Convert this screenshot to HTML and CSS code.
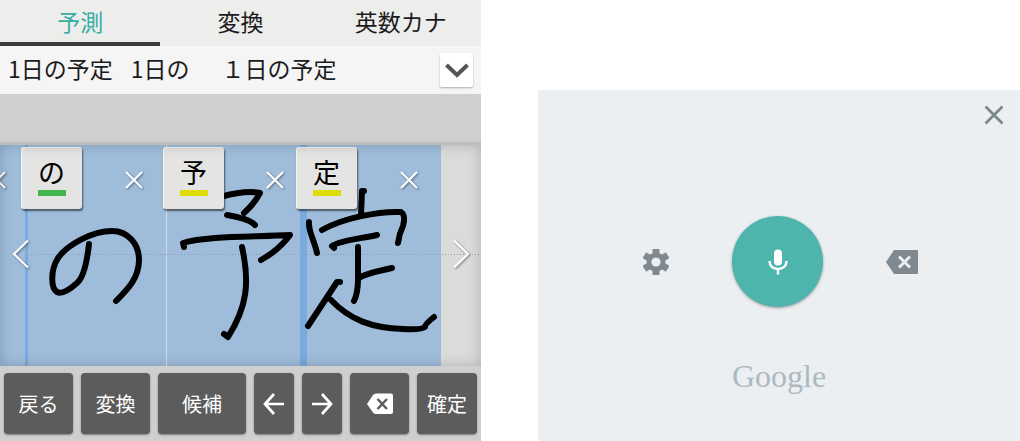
FILE: index.html
```
<!DOCTYPE html>
<html lang="ja">
<head>
  <meta charset="UTF-8">
  <meta name="viewport" content="width=device-width, initial-scale=1">
  <title>手書き入力と音声入力</title>
  <link rel="stylesheet" href="styles.css">
</head>
<body>
  <div class="page">
    <section class="handwriting">
      <nav class="tabs">
        <button type="button" class="tab active">予測</button>
        <button type="button" class="tab">変換</button>
        <button type="button" class="tab">英数カナ</button>
      </nav>

      <div class="candidates">
        <button type="button" class="candidate">1日の予定</button>
        <button type="button" class="candidate">1日の</button>
        <button type="button" class="candidate">１日の予定</button>
        <button type="button" class="expand" aria-label="候補を開く">
          <svg width="24" height="16" viewBox="0 0 24 16"><path d="M1.500 3 L12 13 L22.500 3" fill="none" stroke="#555" stroke-width="4"/></svg>
        </button>
      </div>

      <div class="spacer"></div>

      <div class="pad">
        <svg class="ink" viewBox="0 145 481 221" preserveAspectRatio="xMinYMin slice">
          <rect x="0" y="145" width="441" height="221" fill="#9fbddb"/>
          <rect x="25" y="145" width="3" height="221" fill="#7aabde"/>
          <rect x="166" y="145" width="1" height="221" fill="#d8dbdc"/>
          <rect x="300" y="145" width="7" height="221" fill="#7aabde"/>
          <line x1="28" y1="254.500" x2="481" y2="254.500" stroke="#8b9cac" stroke-dasharray="1 2"/>
          <g class="strokes">
            <!-- の -->
            <path d="M89 244 C87 262 83 278 77 283 C67 292 61 294 57 292 C51 288 50 271 58 258 C67 245 92 231 112 231 C128 231 139 244 139 260 C139 279 126 291 116 301"/>
            <!-- 予 -->
            <path d="M220 197 Q246 190 260 193 Q255 203 244 213"/>
            <path d="M227 215 Q250 219 255 225"/>
            <path d="M184 247 L183 243 C205 236 252 237 290 235 Q279 250 261 260"/>
            <path d="M242 247 C250 283 247 307 228 337 L224 334"/>
            <!-- 定 -->
            <path d="M364 191 L362 191 L361 215"/>
            <path d="M309 222 C308 231 315 242 317 253"/>
            <path d="M322 230 C343 218 379 211 401 212 Q406 215 403 226 Q399 234 398 243"/>
            <path d="M334 248 L332 246 C341 240 359 239 377 235"/>
            <path d="M358 247 V279 Q358 293 354 301"/>
            <path d="M359 278 Q364 274 392 268"/>
            <path d="M340 282 L337 282 L308 326"/>
            <path d="M331 300 C350 320 372 328 403 329 Q422 330 425 327 Q425 324 434 317"/>
          </g>
        </svg>

        <button type="button" class="tile tile-no">の</button>
        <button type="button" class="tile tile-yo">予</button>
        <button type="button" class="tile tile-tei">定</button>

        <button type="button" class="mark del-prev" aria-label="前の文字を削除"><svg width="20" height="20" viewBox="0 0 20 20"><path d="M2 2 L18 18 M18 2 L2 18"/></svg></button>
        <button type="button" class="mark del-no" aria-label="のを削除"><svg width="20" height="20" viewBox="0 0 20 20"><path d="M2 2 L18 18 M18 2 L2 18"/></svg></button>
        <button type="button" class="mark del-yo" aria-label="予を削除"><svg width="20" height="20" viewBox="0 0 20 20"><path d="M2 2 L18 18 M18 2 L2 18"/></svg></button>
        <button type="button" class="mark del-tei" aria-label="定を削除"><svg width="20" height="20" viewBox="0 0 20 20"><path d="M2 2 L18 18 M18 2 L2 18"/></svg></button>
        <button type="button" class="mark scroll-left" aria-label="左へ"><svg width="18" height="30" viewBox="0 0 18 30"><path d="M16 1.500 L2 15 L16 28.500"/></svg></button>
        <button type="button" class="mark scroll-right" aria-label="右へ"><svg width="18" height="30" viewBox="0 0 18 30"><path d="M2 1.500 L16 15 L2 28.500"/></svg></button>
      </div>

      <div class="keys">
        <button type="button" class="key">戻る</button>
        <button type="button" class="key">変換</button>
        <button type="button" class="key">候補</button>
        <button type="button" class="key" aria-label="左"><svg width="22" height="22" viewBox="0 0 22 22"><path d="M11 1 L2 11 L11 21 M2 11 H21" fill="none" stroke="#fff" stroke-width="2.700"/></svg></button>
        <button type="button" class="key" aria-label="右"><svg width="22" height="22" viewBox="0 0 22 22"><path d="M11 1 L20 11 L11 21 M20 11 H1" fill="none" stroke="#fff" stroke-width="2.700"/></svg></button>
        <button type="button" class="key" aria-label="削除"><svg width="26" height="22" viewBox="0 0 26 22"><path d="M9 0.500 H24 Q26 0.500 26 2.500 V19 Q26 21 24 21 H9 Q7 21 6 19.500 L0 11 L6 2 Q7 0.500 9 0.500 Z" fill="#fff"/><path d="M10.500 6 L20 16 M20 6 L10.500 16" stroke="#5c5c5c" stroke-width="2.500"/></svg></button>
        <button type="button" class="key">確定</button>
      </div>
    </section>

    <section class="voice">
      <div class="voice-top">
        <button type="button" class="icon-button" aria-label="閉じる"><svg width="20" height="20" viewBox="0 0 20 20"><path d="M1.500 1.500 L18.500 18.500 M18.500 1.500 L1.500 18.500" stroke="#7b878d" stroke-width="2.700"/></svg></button>
      </div>
      <div class="voice-controls">
        <button type="button" class="icon-button" aria-label="設定">
          <svg width="26" height="26" viewBox="0 0 26 26">
            <g fill="#7f898f">
              <circle cx="13" cy="13" r="9.500"/>
              <rect x="9.500" y="0" width="7" height="26" rx="0.500"/>
              <rect x="9.500" y="-0.500" width="7" height="27" rx="0.500" transform="rotate(60 13 13)"/>
              <rect x="9.500" y="-0.500" width="7" height="27" rx="0.500" transform="rotate(120 13 13)"/>
            </g>
            <circle cx="13" cy="13" r="4.600" fill="#ebeff2"/>
          </svg>
        </button>
        <button type="button" class="mic" aria-label="音声入力">
          <svg width="20" height="26" viewBox="0 0 20 26"><rect x="6" y="0.500" width="8" height="16" rx="4" fill="#fff"/><path d="M1.500 12 C1.500 17 5 20 10 20 C15 20 18.500 17 18.500 12 M10 20 V25.500" fill="none" stroke="#fff" stroke-width="2.500"/></svg>
        </button>
        <button type="button" class="icon-button" aria-label="削除">
          <svg width="32" height="24" viewBox="0 0 32 24"><path d="M8 0 H31 Q32 0 32 1 V23 Q32 24 31 24 H8 L0 12 Z" fill="#7f898f"/><path d="M13 6.500 L24 17.500 M24 6.500 L13 17.500" stroke="#ebeff2" stroke-width="3"/></svg>
        </button>
      </div>
      <p class="brand">Google</p>
    </section>
  </div>
</body>
</html>
```
FILE: styles.css
```
/* Base */
body { margin: 0; background: #fff; font-family: "Noto Sans CJK JP", sans-serif; color: #1c1c1e; }
button { margin: 0; padding: 0; border: none; background: none; font: inherit; color: inherit; cursor: pointer; }
svg { display: block; }
.page { display: grid; grid-template-columns: 481fr 482fr; column-gap: 57px; align-items: end; }

/* Handwriting keyboard */
.handwriting { background: #cfcfcf; min-width: 0; }
.tabs { display: grid; grid-template-columns: repeat(3, 1fr); background: #ededec; }
.tab { height: 46px; font-size: 23px; line-height: 38px; border-bottom: 4px solid transparent; }
.tab.active { color: #37aea4; border-bottom-color: #3b3b40; }
.candidates { display: flex; align-items: center; height: 48px; padding: 0 8px; background: #f5f5f5; }
.candidate { margin-right: 18px; padding-bottom: 4px; font-size: 23px; line-height: 32px; white-space: nowrap; }
.candidate:nth-child(2) { margin-right: 32px; }
.expand { display: flex; align-items: center; justify-content: center; width: 33px; height: 34px; margin-left: auto; border-radius: 2px; background: #fff; box-shadow: 0 1px 2px rgba(0,0,0,0.3); }
.spacer { height: 48px; }

/* Writing pad */
.pad { position: relative; overflow: hidden; border-top: 3px solid #bdbdbd; background: #dbdbda; }
.pad::after { content: ""; position: absolute; inset: 0; box-shadow: inset 0 0 14px rgba(0,0,0,0.2); pointer-events: none; }
.ink { width: 100%; height: 221px; }
.strokes { fill: none; stroke: #000; stroke-width: 6px; stroke-linecap: round; stroke-linejoin: round; }
.tile { position: absolute; top: 2px; display: flex; flex-direction: column; align-items: center; width: 61px; height: 62px; padding-top: 7px; border-radius: 3px; background: #e4e4e3; box-shadow: inset 1px 1px 0 #f5f5f5, 1px 2px 2px rgba(0,0,0,0.55); font-size: 27px; line-height: 36px; color: #000; }
.tile::after { content: ""; width: 28px; height: 6px; background: #dedc0c; }
.tile-no { left: 21px; }
.tile-no::after { background: #3fb54b; }
.tile-yo { left: 163px; }
.tile-tei { left: 296px; }
.mark { position: absolute; top: 25px; filter: drop-shadow(1px 1px 1px rgba(0,0,0,0.45)); }
.mark path { fill: none; stroke: #fff; stroke-width: 2px; }
.del-prev { left: -13px; }
.del-no { left: 124px; }
.del-yo { left: 265px; }
.del-tei { left: 399px; }
.scroll-left, .scroll-right { top: 94px; }
.scroll-left { left: 12px; }
.scroll-right { left: 452px; }

/* Bottom keys */
.keys { display: grid; grid-template-columns: 69fr 69fr 88fr 40fr 40fr 59fr 60fr; gap: 8px; padding: 7px 4px; }
.key { display: flex; align-items: center; justify-content: center; height: 61px; border-radius: 4px; background: #5c5c5c; box-shadow: 0 1px 2px rgba(0,0,0,0.4); font-size: 20px; line-height: 28px; color: #fff; }

/* Voice input */
.voice { box-sizing: border-box; height: 351px; background: #ebeff2; }
.voice-top { display: flex; justify-content: flex-end; padding: 15px 16px 0; }
.voice-controls { display: flex; align-items: center; justify-content: space-between; padding: 91px 102px 0 105px; }
.mic { display: flex; align-items: center; justify-content: center; width: 91px; height: 91px; border-radius: 50%; background: #4db5ac; box-shadow: 0 1px 3px rgba(0,0,0,0.35); }
.brand { margin: 49px 0 0; font-family: "Liberation Serif", serif; font-size: 32px; line-height: 40px; text-align: center; color: #adb9c0; }
```
